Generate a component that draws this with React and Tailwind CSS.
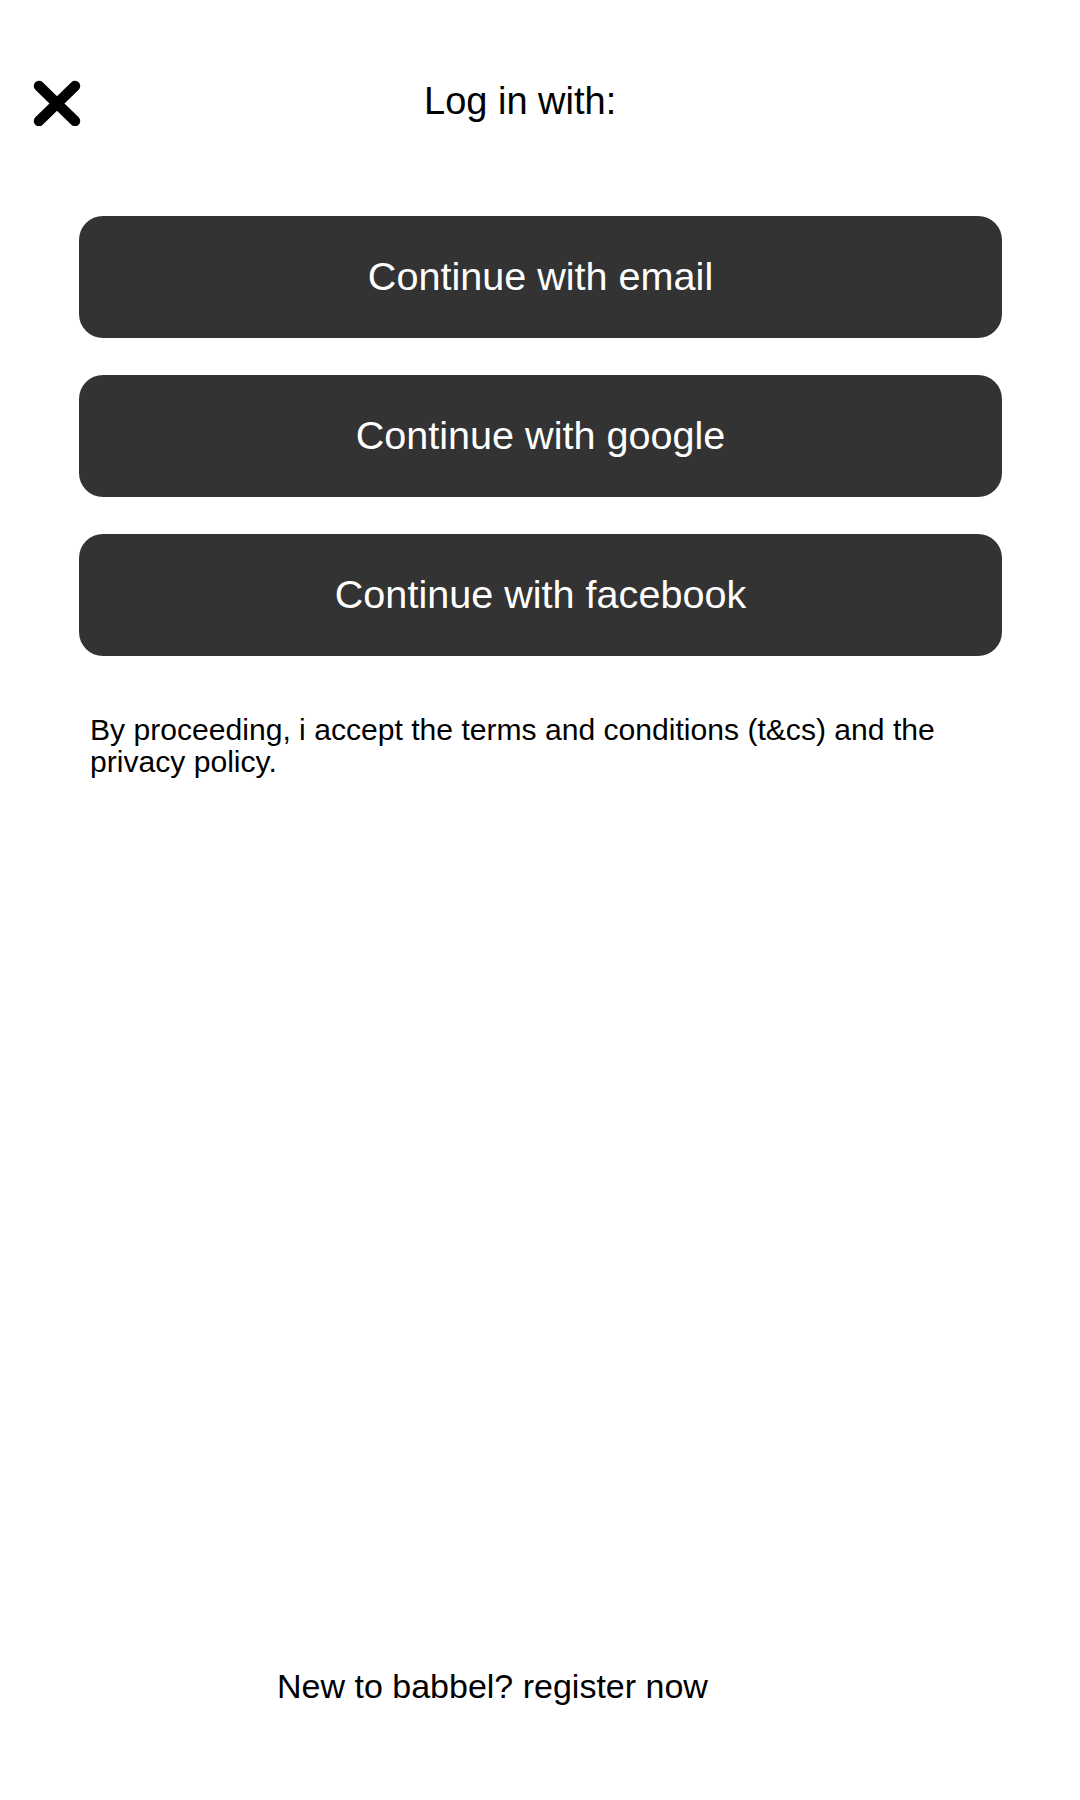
import React from 'react';

const CloseIcon = () => (
    <svg width="48" height="46" viewBox="0 0 48 46" className="shrink-0">
        <path d="M6 6 L42 41 M42 6 L6 41" stroke="#000" strokeWidth="10.5" strokeLinecap="round" fill="none" />
    </svg>
);

const LoginOptions = () => {
    const options = ["Continue with email", "Continue with google", "Continue with facebook"];

    return (
        <main className="min-h-[1800px] w-full bg-white flex flex-col font-['Liberation_Sans',Arial,sans-serif] text-black">
            {/* Header */}
            <div className="flex items-start pt-[80px] pl-[33px]">
                <button className="p-0">
                    <CloseIcon />
                </button>
                <h1 className="ml-[343px] mt-[2px] text-[38px] leading-[38px] font-normal">Log in with:</h1>
            </div>

            {/* Login buttons */}
            <div className="flex flex-col gap-[37px] pl-[79px] pr-[78px] mt-[90px]">
                {options.map(label => (
                    <button
                        key={label}
                        className="h-[122px] w-full rounded-[24px] bg-[#333333] text-white text-[39.6px] leading-none"
                    >
                        {label}
                    </button>
                ))}
            </div>

            <p className="mt-[58px] ml-[90px] mr-[96px] text-[30.1px] leading-[32px]">
                By proceeding, i accept the terms and conditions (t&amp;cs) and the privacy policy.
            </p>

            {/* Footer */}
            <div className="mt-auto pb-[95px] pl-[277px]">
                <a className="text-[34px] leading-[34px]">New to babbel? register now</a>
            </div>
        </main>
    );
};

export default LoginOptions;
